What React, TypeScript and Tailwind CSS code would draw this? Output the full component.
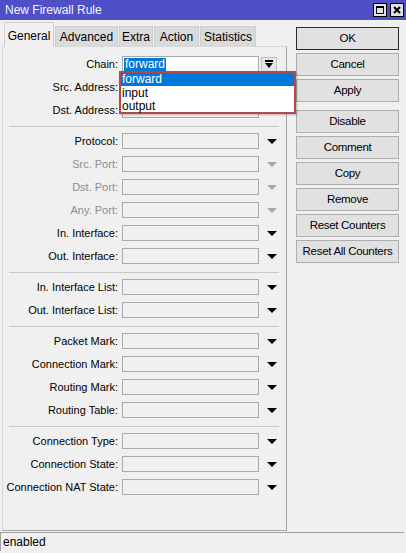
import type { ReactNode } from "react";

type Field = { label: string; disabled?: boolean; arrow?: boolean };

const sections: Field[][] = [
  [
    { label: "Protocol:", arrow: true },
    { label: "Src. Port:", disabled: true, arrow: true },
    { label: "Dst. Port:", disabled: true, arrow: true },
    { label: "Any. Port:", disabled: true, arrow: true },
    { label: "In. Interface:", arrow: true },
    { label: "Out. Interface:", arrow: true },
  ],
  [
    { label: "In. Interface List:", arrow: true },
    { label: "Out. Interface List:", arrow: true },
  ],
  [
    { label: "Packet Mark:", arrow: true },
    { label: "Connection Mark:", arrow: true },
    { label: "Routing Mark:", arrow: true },
    { label: "Routing Table:", arrow: true },
  ],
  [
    { label: "Connection Type:", arrow: true },
    { label: "Connection State:", arrow: true },
    { label: "Connection NAT State:", arrow: true },
  ],
];

const tabs = ["Advanced", "Extra", "Action", "Statistics"];
const tabWidths = ["w-[63px]", "w-[34px]", "w-[45px]", "w-[56px]"];

function Caret({ disabled }: { disabled?: boolean }) {
  return (
    <svg width="10" height="5" viewBox="0 0 10 5" className="ml-[8px]">
      <polygon points="0,0 10,0 5,5" fill={disabled ? "#a8a8a8" : "#000"} />
    </svg>
  );
}

function Row({ label, disabled, arrow, children }: Field & { children?: ReactNode }) {
  return (
    <div className="flex items-center h-[16px]">
      <div
        className={`w-[116px] text-right pr-[1px] whitespace-nowrap ${disabled ? "text-[#8d8d8d]" : "text-black"}`}
      >
        {label}
      </div>
      {children ?? <div className="ml-[3px] w-[137px] h-[16px] border border-[#a9a9a9] bg-[#f0f0f0]" />}
      {arrow && <Caret disabled={disabled} />}
    </div>
  );
}

function Separator() {
  return <div className="mt-[8px] mb-[6px] ml-[6px] w-[270px] h-px bg-[#c8c8c8]" />;
}

function Btn({ children, primary }: { children: ReactNode; primary?: boolean }) {
  return (
    <div
      className={`h-[23px] w-[103px] flex items-center justify-center bg-[#e1e1e1] border ${
        primary ? "border-[#2b2b2b]" : "border-[#adadad]"
      }`}
    >
      {children}
    </div>
  );
}

export default function App() {
  return (
    <div
      className="w-[406px] h-[553px] bg-[#f0f0f0] flex flex-col overflow-hidden text-[11px] text-black select-none"
      style={{ fontFamily: '"Liberation Sans", Arial, sans-serif' }}
    >
      {/* title bar */}
      <div className="h-[20px] bg-[#4f4fc7] flex items-center pl-[5px] pr-[2px]">
        <span className="text-[12px] text-[#f4f4ff] flex-1">New Firewall Rule</span>
        <div className="w-[14px] h-[14px] bg-[#e2e2e2] border border-black flex items-center justify-center">
          <div className="w-[8px] h-[8px] border border-black border-t-2" />
        </div>
        <div className="w-[14px] h-[14px] ml-[3px] bg-[#e2e2e2] border border-black flex items-center justify-center">
          <svg width="8" height="8" viewBox="0 0 8 8">
            <path d="M1 1 L7 7 M7 1 L1 7" stroke="#000" strokeWidth="2" />
          </svg>
        </div>
      </div>

      <div className="flex flex-1">
        {/* tabs + form */}
        <div className="ml-[2px] w-[285px] flex flex-col relative">
          <div className="h-[26px] flex items-end pl-[2px] relative z-10">
            <div className="w-[50px] h-[25px] bg-[#f0f0f0] border border-b-0 border-[#d0d0d0] flex items-start justify-center pt-[4px] -mb-px text-[12px]">
              General
            </div>
            {tabs.map((t, i) => (
              <div
                key={t}
                className={`${tabWidths[i]} h-[20px] ml-px bg-[#dadada] border border-b-0 border-[#cfcfcf] flex items-center justify-center text-[12px]`}
              >
                {t}
              </div>
            ))}
          </div>

          <div className="h-[485px] border border-[#a5a5a5] border-t-[#d8d8d8] border-l-[#d8d8d8] pt-[9px] flex flex-col">
            <div className="flex flex-col gap-[7px]">
              <Row label="Chain:">
                <div className="ml-[3px] w-[137px] h-[16px] border border-[#a9a9a9] bg-white flex items-center pl-[1px]">
                  <span className="bg-[#0078d7] text-white px-[1px] leading-[13px] text-[12px]">forward</span>
                </div>
                <div className="ml-[2px] w-[16px] h-[15px] border border-[#c0c0c0] bg-[#e6e6e6] flex items-center justify-center">
                  <svg width="8" height="9" viewBox="0 0 8 9">
                    <rect x="0" y="0" width="8" height="2" fill="#000" />
                    <polygon points="0,3 8,3 4,8" fill="#000" />
                  </svg>
                </div>
              </Row>
              <Row label="Src. Address:" />
              <Row label="Dst. Address:" />
            </div>
            {sections.map((sec, i) => (
              <div key={i}>
                <Separator />
                <div className="flex flex-col gap-[7px]">
                  {sec.map((f) => (
                    <Row key={f.label} {...f} />
                  ))}
                </div>
              </div>
            ))}
          </div>

          {/* chain dropdown list */}
          <div className="absolute left-[117px] top-[51px] w-[177px] h-[43px] bg-white border-2 border-[#b3474f] z-20 text-[12px] leading-[13px] shadow-[1px_1px_2px_rgba(0,0,0,0.25)]">
            <div className="bg-[#0078d7] text-white pl-[1px] h-[13px]">forward</div>
            <div className="pl-[1px] h-[14px] pt-px">input</div>
            <div className="pl-[1px] h-[13px]">output</div>
          </div>
        </div>

        {/* action buttons */}
        <div className="ml-[9px] mt-[7px] flex flex-col gap-[3px] text-[11.5px] tracking-[-0.3px]">
          <Btn primary>OK</Btn>
          <Btn>Cancel</Btn>
          <Btn>Apply</Btn>
          <div className="h-[2px]" />
          <Btn>Disable</Btn>
          <Btn>Comment</Btn>
          <Btn>Copy</Btn>
          <Btn>Remove</Btn>
          <Btn>Reset Counters</Btn>
          <Btn>Reset All Counters</Btn>
        </div>
      </div>

      {/* status bar */}
      <div className="h-[19px] mt-[1px] mb-[2px] mr-[2px] border-t border-l border-[#a0a0a0] flex items-center pl-[2px] text-[12px]">
        enabled
      </div>
    </div>
  );
}
